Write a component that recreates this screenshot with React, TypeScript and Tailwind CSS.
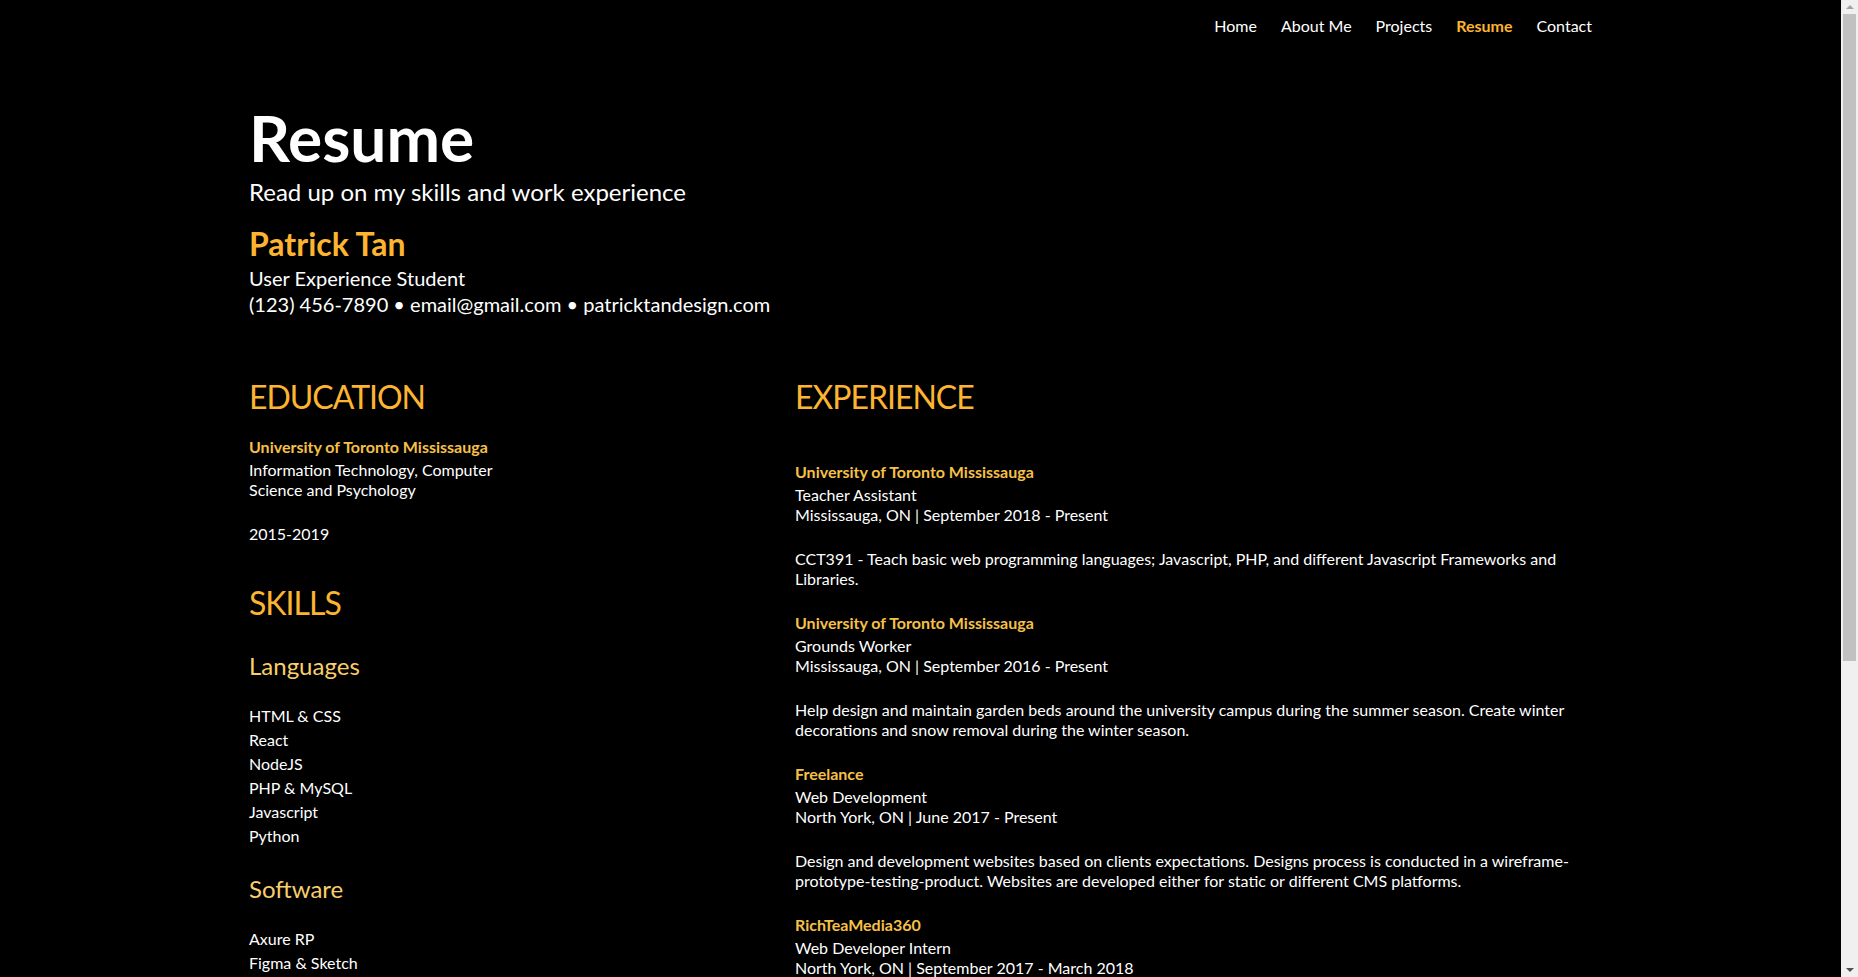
const navLinks = ["Home", "About Me", "Projects", "Resume", "Contact"]

const languages = ["HTML & CSS", "React", "NodeJS", "PHP & MySQL", "Javascript", "Python"]
const software = ["Axure RP", "Figma & Sketch", "Adobe Photoshop", "Adobe Illustrator", "Adobe XD"]

const jobs = [
    {
        company: "University of Toronto Mississauga",
        title: "Teacher Assistant",
        where: "Mississauga, ON | September 2018 - Present",
        desc: "CCT391 - Teach basic web programming languages; Javascript, PHP, and different Javascript Frameworks and Libraries.",
    },
    {
        company: "University of Toronto Mississauga",
        title: "Grounds Worker",
        where: "Mississauga, ON | September 2016 - Present",
        desc: "Help design and maintain garden beds around the university campus during the summer season. Create winter decorations and snow removal during the winter season.",
    },
    {
        company: "Freelance",
        title: "Web Development",
        where: "North York, ON | June 2017 - Present",
        desc: "Design and development websites based on clients expectations. Designs process is conducted in a wireframe-prototype-testing-product. Websites are developed either for static or different CMS platforms.",
    },
    {
        company: "RichTeaMedia360",
        title: "Web Developer Intern",
        where: "North York, ON | September 2017 - March 2018",
        desc: "Developed and maintained client websites using WordPress, HTML, CSS and Javascript.",
    },
]

function Scrollbar() {
    // browser scrollbar as seen in the screenshot
    return (
        <div className="fixed right-0 top-0 h-screen w-[17px] bg-[#f0f0f0] flex flex-col items-center">
            <div className="h-[14px] w-full grid place-content-center">
                <div className="w-0 h-0 border-x-[4px] border-x-transparent border-b-[4px] border-b-[#a3a3a3]" />
            </div>
            <div className="h-[647px] w-[13px] bg-[#c1c1c1]" />
            <div className="flex-1" />
            <div className="h-[14px] w-full grid place-content-center">
                <div className="w-0 h-0 border-x-[4px] border-x-transparent border-t-[4px] border-t-[#505050]" />
            </div>
        </div>
    )
}

export default function App() {
    return (
        <div className="min-h-screen bg-black text-white font-['Lato','Open_Sans',sans-serif] pr-[17px]">
            <nav className="mx-auto w-[1343px] flex justify-end gap-6 pt-[14px] text-[16px] leading-6">
                {navLinks.map((l) => (
                    <a key={l} className={l === "Resume" ? "text-[#fcb431] font-bold" : "text-white"}>
                        {l}
                    </a>
                ))}
            </nav>

            <div className="mx-auto w-[1343px] pb-20">
                <header className="mt-[68px]">
                    <h1 className="text-[64px] leading-none font-bold">Resume</h1>
                    <p className="mt-[6px] text-[24px] leading-8">Read up on my skills and work experience</p>
                    <h2 className="mt-4 text-[32px] leading-10 font-bold text-[#fcb431]">Patrick Tan</h2>
                    <p className="mt-px text-[20px] leading-[26px]">User Experience Student</p>
                    <p className="text-[20px] leading-[26px]">(123) 456-7890 • email@gmail.com • patricktandesign.com</p>
                </header>

                <div className="mt-[60px] grid grid-cols-[546px_1fr] text-[16px] leading-5">
                    <div>
                        <h3 className="text-[32px] leading-10 tracking-[-1px] text-[#fcb431]">EDUCATION</h3>
                        <p className="mt-5 font-bold text-[#f7c047]">University of Toronto Mississauga</p>
                        <p className="mt-[3px] max-w-[275px]">Information Technology, Computer Science and Psychology</p>
                        <p className="mt-6">2015-2019</p>

                        <h3 className="mt-[39px] text-[32px] leading-10 tracking-[-1px] text-[#fcb431]">SKILLS</h3>
                        <h4 className="mt-[27px] text-[24px] leading-8 text-[#f9ce6b]">Languages</h4>
                        <ul className="mt-[22px] leading-6">
                            {languages.map((s) => (
                                <li key={s}>{s}</li>
                            ))}
                        </ul>
                        <h4 className="mt-[25px] text-[24px] leading-8 text-[#f9ce6b]">Software</h4>
                        <ul className="mt-[22px] leading-6">
                            {software.map((s) => (
                                <li key={s}>{s}</li>
                            ))}
                        </ul>
                    </div>

                    <div>
                        <h3 className="text-[32px] leading-10 tracking-[-1px] text-[#fcb431]">EXPERIENCE</h3>
                        <div className="mt-[45px] flex flex-col gap-6">
                            {jobs.map((j) => (
                                <div key={j.title}>
                                    <p className="font-bold text-[#f7c047]">{j.company}</p>
                                    <p className="mt-[3px]">{j.title}</p>
                                    <p>{j.where}</p>
                                    <p className="mt-6">{j.desc}</p>
                                </div>
                            ))}
                        </div>
                    </div>
                </div>
            </div>
            <Scrollbar />
        </div>
    )
}
